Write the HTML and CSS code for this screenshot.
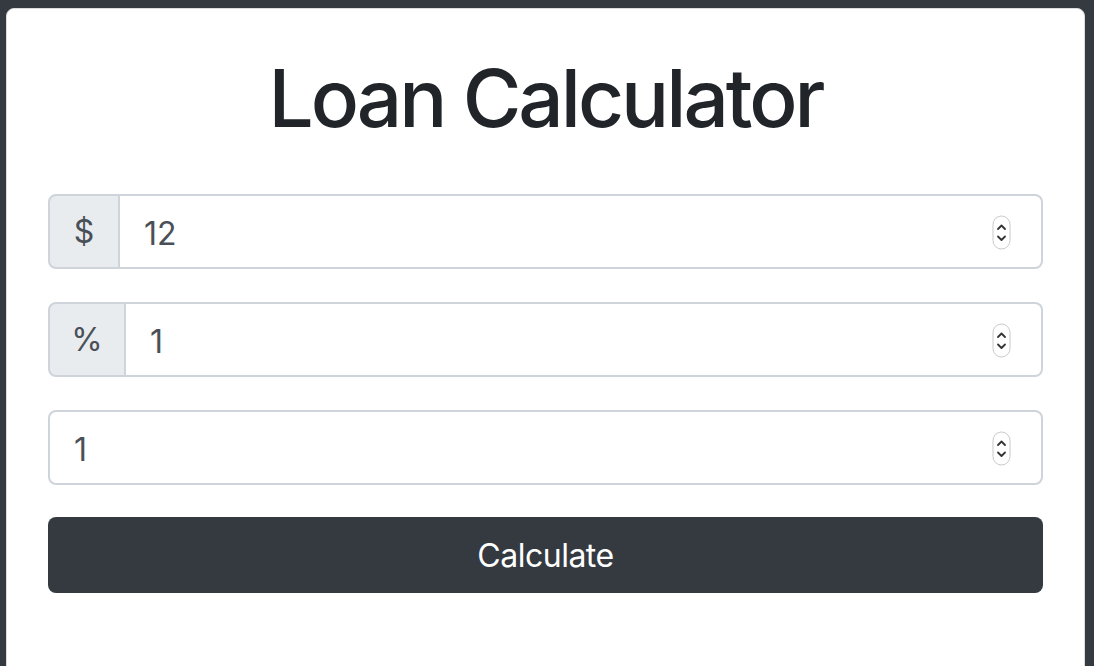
FILE: index.html
```html
<!DOCTYPE html>
<html>
<head>
<meta charset="utf-8">
<link rel="stylesheet" href="styles.css">
</head>
<body>
<div class="page">
  <div class="card">
    <h1 class="title">Loan Calculator</h1>
    <form class="form">
      <div class="group">
        <span class="addon addon-dollar">$</span>
        <div class="field">
          <input class="input" type="text" value="12">
          <span class="spin"><svg width="19" height="35" viewBox="0 0 19 35"><rect x="1" y="1" width="17" height="33" rx="8.5" fill="#fff" stroke="#c9c9c9"/><path d="M6 14 L9.5 10.5 L13 14" fill="none" stroke="#333" stroke-width="1.8" stroke-linecap="round" stroke-linejoin="round"/><path d="M6 21.5 L9.5 25 L13 21.5" fill="none" stroke="#333" stroke-width="1.8" stroke-linecap="round" stroke-linejoin="round"/></svg></span>
        </div>
      </div>
      <div class="group">
        <span class="addon addon-pct">%</span>
        <div class="field">
          <input class="input" type="text" value="1">
          <span class="spin"><svg width="19" height="35" viewBox="0 0 19 35"><rect x="1" y="1" width="17" height="33" rx="8.5" fill="#fff" stroke="#c9c9c9"/><path d="M6 14 L9.5 10.5 L13 14" fill="none" stroke="#333" stroke-width="1.8" stroke-linecap="round" stroke-linejoin="round"/><path d="M6 21.5 L9.5 25 L13 21.5" fill="none" stroke="#333" stroke-width="1.8" stroke-linecap="round" stroke-linejoin="round"/></svg></span>
        </div>
      </div>
      <div class="group">
        <div class="field field-solo">
          <input class="input" type="text" value="1">
          <span class="spin"><svg width="19" height="35" viewBox="0 0 19 35"><rect x="1" y="1" width="17" height="33" rx="8.5" fill="#fff" stroke="#c9c9c9"/><path d="M6 14 L9.5 10.5 L13 14" fill="none" stroke="#333" stroke-width="1.8" stroke-linecap="round" stroke-linejoin="round"/><path d="M6 21.5 L9.5 25 L13 21.5" fill="none" stroke="#333" stroke-width="1.8" stroke-linecap="round" stroke-linejoin="round"/></svg></span>
        </div>
      </div>
      <button class="btn" type="button">Calculate</button>
    </form>
  </div>
</div>
</body>
</html>
```
FILE: styles.css
```css
* { box-sizing: border-box; }
html, body { margin: 0; padding: 0; }
body {
  background: #343a40;
  font-family: Inter, "Noto Sans", "Liberation Sans", sans-serif;
  color: #212529;
  overflow: hidden;
  height: 666px;
}
.page {
  padding: 8px 9px 0 6px;
}
.card {
  background: #fff;
  border: 1px solid #dcdcdc;
  border-radius: 8px;
  padding: 41px 41px 120px 41px;
}
.title {
  margin: 0 0 48px 0;
  text-align: center;
  font-size: 80px;
  font-weight: 500;
  line-height: 96px;
  letter-spacing: -3px;
  color: #212529;
}
.form { display: flex; flex-direction: column; }
.group {
  display: flex;
  height: 75px;
  margin-bottom: 33px;
}
.addon {
  display: flex;
  align-items: center;
  justify-content: center;
  background: #e9ecef;
  border: 2px solid #ced4da;
  border-radius: 8px 0 0 8px;
  color: #495057;
  font-size: 32px;
}
.addon-dollar { width: 72px; }
.addon-pct { width: 78px; }
.field {
  flex: 1;
  display: flex;
  align-items: center;
  border: 2px solid #ced4da;
  border-left: none;
  border-radius: 0 8px 8px 0;
  padding-right: 30px;
}
.field-solo {
  border-left: 2px solid #ced4da;
  border-radius: 8px;
}
.input {
  flex: 1;
  min-width: 0;
  border: none;
  outline: none;
  background: transparent;
  font-family: inherit;
  font-size: 32px;
  color: #495057;
  padding: 3px 0 0 24px;
  height: 100%;
}
.spin { display: flex; margin-top: 2px; }
.btn {
  height: 76px;
  border: none;
  border-radius: 8px;
  background: #343a40;
  color: #fff;
  font-family: inherit;
  font-size: 32px;
  letter-spacing: -0.5px;
  margin-top: -1px;
}
```
